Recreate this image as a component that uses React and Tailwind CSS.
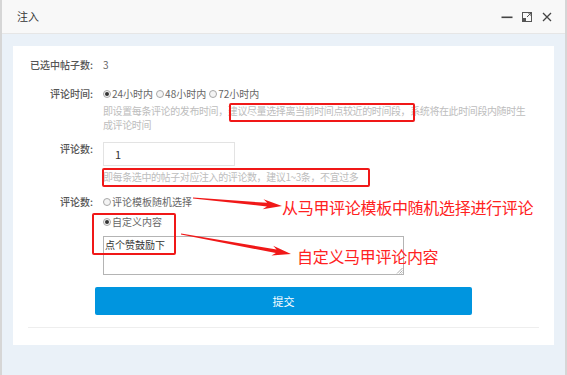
import React from 'react'

const FONT = { fontFamily: '"Noto Sans CJK SC", "Noto Sans", sans-serif' }

// red tapered annotation arrow, drawn along x then rotated into place
function Arrow({ x1, y1, x2, y2 }) {
  const dx = x2 - x1
  const dy = y2 - y1
  const L = Math.sqrt(dx * dx + dy * dy)
  const a = (Math.atan2(dy, dx) * 180) / Math.PI
  const pts = [
    [0, -0.6], [L - 15, -1.8], [L - 19, -5], [L, 0], [L - 19, 5], [L - 15, 1.8], [0, 0.6],
  ].map(p => p.join(',')).join(' ')
  return <polygon points={pts} fill="#f01818" transform={`translate(${x1} ${y1}) rotate(${a})`} />
}

function Radio({ checked, label }) {
  return (
    <span className="flex items-center">
      <span className="w-[8px] h-[8px] rounded-full border border-[#a8a8a8] bg-[#f4f4f4] flex items-center justify-center">
        {checked && <span className="w-[4px] h-[4px] rounded-full bg-[#333]" />}
      </span>
      <span className="ml-[1px]">{label}</span>
    </span>
  )
}

export default function App() {
  return (
    <div className="w-[567px] h-[375px] bg-[#d6d6d6] overflow-hidden relative" style={FONT}>
      <div className="ml-[2px] w-[563px] h-[375px] flex flex-col bg-[#eaf1f8]">
        {/* title bar */}
        <div className="h-[34px] shrink-0 bg-[#f8f8f8] border-b border-[#e6e6e6] flex items-center pl-[15px] pr-[12px]">
          <span className="text-[11px] text-[#333]">注入</span>
          <div className="ml-auto flex items-center gap-[8px] text-[#444]">
            <svg width="12" height="12" viewBox="0 0 12 12">
              <rect x="0.5" y="5.5" width="11" height="1.6" fill="#444" />
            </svg>
            <svg width="12" height="12" viewBox="0 0 12 12" fill="none" stroke="#555" strokeWidth="1">
              <rect x="1.5" y="1.5" width="9" height="9" />
              <rect x="1.5" y="7.5" width="3" height="3" fill="#555" />
              <path d="M6 6 L10 2 M7 2 H10 V5" />
            </svg>
            <svg width="12" height="12" viewBox="0 0 12 12" fill="none" stroke="#444" strokeWidth="1.3">
              <path d="M2 2 L10 10 M10 2 L2 10" />
            </svg>
          </div>
        </div>

        {/* body */}
        <div className="pt-[12px] px-[11px]">
          <div className="bg-white h-[299px] pt-[12px] text-[10px] leading-[14px] text-[#666]">
            <div className="flex">
              <div className="w-[80px] text-right text-[#555] font-medium">已选中帖子数:</div>
              <div className="ml-[10px]">3</div>
            </div>

            <div className="flex mt-[15px]">
              <div className="w-[80px] text-right text-[#555] font-medium">评论时间:</div>
              <div className="ml-[10px]">
                <div className="flex gap-[3px]">
                  <Radio checked label="24小时内" />
                  <Radio label="48小时内" />
                  <Radio label="72小时内" />
                </div>
                <div className="mt-[3px] leading-[14px] text-[#bdbdbd] whitespace-nowrap tracking-[-0.4px]">
                  即设置每条评论的发布时间，建议尽量选择离当前时间点较近的时间段，系统将在此时间段内随时生
                  <br />
                  成评论时间
                </div>
              </div>
            </div>

            <div className="flex mt-[10px]">
              <div className="w-[80px] text-right text-[#555] font-medium">评论数:</div>
              <div className="ml-[10px]">
                <div className="w-[132px] h-[24px] border border-[#e3e3e3] flex items-center pl-[11px] text-[11px] text-[#333]">1</div>
                <div className="mt-[4px] leading-[13px] text-[#bdbdbd] whitespace-nowrap tracking-[-0.4px]">
                  即每条选中的帖子对应注入的评论数，建议1~3条，不宜过多
                </div>
              </div>
            </div>

            <div className="flex mt-[12px]">
              <div className="w-[80px] text-right text-[#555] font-medium">评论数:</div>
              <div className="ml-[10px]">
                <Radio label="评论模板随机选择" />
                <div className="mt-[6px]">
                  <Radio checked label="自定义内容" />
                </div>
                <div className="mt-[7px] w-[301px] h-[39px] border border-[#b4b4b4] pl-[1px] pt-[1px] text-[#333] relative">
                  点个赞鼓励下
                  <svg className="absolute right-0 bottom-0" width="7" height="7" viewBox="0 0 7 7" stroke="#999" strokeWidth="0.8">
                    <path d="M6.5 1 L1 6.5 M6.5 3.5 L3.5 6.5 M6.5 5.5 L5.5 6.5" />
                  </svg>
                </div>
              </div>
            </div>

            <div className="mt-[12px] ml-[82px] w-[377px] h-[28px] bg-[#0095df] rounded-[2px] flex items-center justify-center text-white text-[11px]">
              提交
            </div>
            <div className="mt-[12px] mx-[15px] h-[1px] bg-[#eeeeee]" />
          </div>
        </div>
      </div>

      {/* annotations overlay */}
      <div className="absolute left-[229px] top-[103px] w-[186px] h-[19px] border-2 border-[#f01818] rounded-[2px]" />
      <div className="absolute left-[102px] top-[168px] w-[268px] h-[19px] border-2 border-[#f01818] rounded-[2px]" />
      <div className="absolute left-[92px] top-[213px] w-[84px] h-[42px] border-2 border-[#f01818] rounded-[2px]" />
      <svg className="absolute left-0 top-0" width="567" height="375">
        <Arrow x1={193} y1={198} x2={282} y2={206} />
        <Arrow x1={181} y1={234} x2={291} y2={254} />
      </svg>
      <div className="absolute left-[282px] top-[197px] text-[16px] leading-[20px] text-[#f22] whitespace-nowrap tracking-[-0.3px]">
        从马甲评论模板中随机选择进行评论
      </div>
      <div className="absolute left-[297px] top-[246px] text-[16px] leading-[20px] text-[#f22] whitespace-nowrap tracking-[-0.3px]">
        自定义马甲评论内容
      </div>
    </div>
  )
}
